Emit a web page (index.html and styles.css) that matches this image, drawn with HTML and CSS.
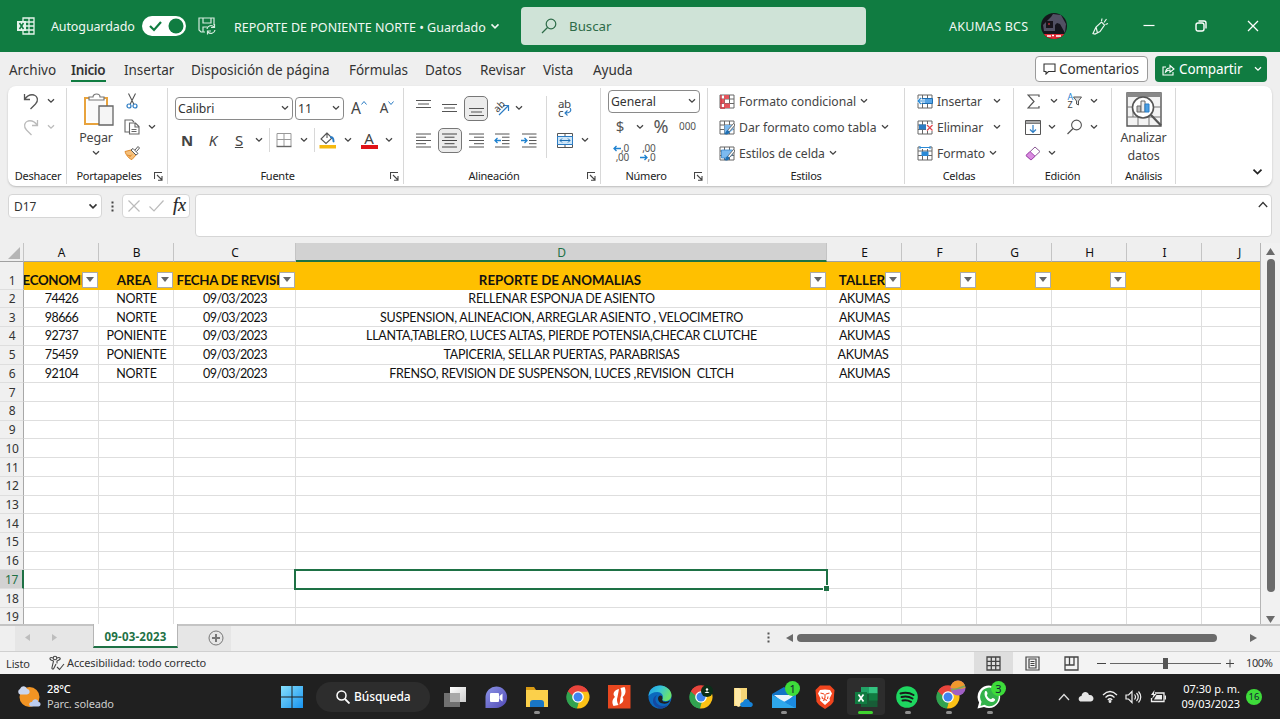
FILE: index.html
```html
<!DOCTYPE html>
<html lang="es">
<head>
<meta charset="utf-8">
<title>REPORTE DE PONIENTE NORTE</title>
<link rel="stylesheet" href="styles.css">
</head>
<body>
<svg class="defs" width="0" height="0">
  <symbol id="chev" viewBox="0 0 8 6"><path d="M1 1.2 4 4.2 7 1.2" fill="none" stroke="currentColor" stroke-width="1.3"/></symbol>
  <symbol id="launch" viewBox="0 0 9 9"><path d="M.5 7V.5H8M3 3l5 5M8 4v4.3H4" fill="none" stroke="#444" stroke-width="1.1"/></symbol>
  <symbol id="grid" viewBox="0 0 16 15"><path d="M1 1h14v13H1zM1 5h14M1 9.500h14M5.500 1v13M10.500 1v13" fill="#fff" stroke="#666" stroke-width="1"/></symbol>
  <symbol id="chrome" viewBox="0 0 24 24"><path d="M12 12 1.900 6.500A11.500 11.500 0 0 1 22.300 7z" fill="#e8453c"/><path d="M12 12 22.300 7A11.500 11.500 0 0 1 11 23.500z" fill="#fbc116"/><path d="M12 12 11 23.500A11.500 11.500 0 0 1 1.900 6.500z" fill="#31a350"/><path d="M12 6.500H22L22.300 7 17 14z" fill="#fbc116"/><path d="M1.900 6.500A11.500 11.500 0 0 1 22 6.500H12L7 11z" fill="#e8453c"/><path d="M1.900 6.500 7 15l6 2-2.500 6.500A11.500 11.500 0 0 1 1.900 6.500z" fill="#31a350"/><circle cx="12" cy="12" r="5.800" fill="#fff"/><circle cx="12" cy="12" r="4.500" fill="#3f83ef"/></symbol>
</svg>

<header class="titlebar">
  <svg class="logo" width="18" height="18" viewBox="0 0 18 18"><path d="M6 1h11v16H6zM6 5h11M6 9h11M6 13h11M12 1v16" fill="none" stroke="#e4f3ea" stroke-width="1.300"/><path d="M0 4h9v10H0z" fill="#e4f3ea"/><path d="m2.500 6 4 6M6.500 6l-4 6" stroke="#107c41" stroke-width="1.500"/></svg>
  <span class="autosave">Autoguardado</span>
  <span class="toggle"><svg width="44" height="20" viewBox="0 0 44 20"><path d="m8 10 4 4 7-8" fill="none" stroke="#107c41" stroke-width="2.200"/><circle cx="34" cy="10" r="7.500" fill="#107c41"/></svg></span>
  <svg class="save" width="18" height="18" viewBox="0 0 18 18" fill="none" stroke="#d5ecdf" stroke-width="1.200"><path d="M16 8V1H1v12l2 2h4M5 1v5h8V1M5 15v-5h4"/><path d="M9 12a4 4 0 0 1 7-2M16.500 7v3.500H13M17 13a4 4 0 0 1-7 2M9.500 17.500V14H13"/></svg>
  <span class="doc">REPORTE DE PONIENTE NORTE • Guardado</span>
  <svg class="docchev" width="10" height="7" viewBox="0 0 8 6"><use href="#chev"/></svg>
  <div class="search"><svg width="16" height="16" viewBox="0 0 16 16" fill="none" stroke="#2d6b48" stroke-width="1.200"><circle cx="10" cy="6" r="4.800"/><path d="M6.500 9.500 1 15"/></svg><span>Buscar</span></div>
  <span class="user">AKUMAS BCS</span>
  <svg class="avatar" width="26" height="26" viewBox="0 0 26 26"><clipPath id="av"><circle cx="13" cy="13" r="13"/></clipPath><g clip-path="url(#av)"><path d="M0 0h26v26H0z" fill="#15151c"/><path d="M2 12 10 4l2-3 8 1 5 9-1 9-5-9-3-1-2 2v6H3z" fill="#515163"/><path d="M5 8h7v7H5z" fill="#18151b"/><path d="M7 10h2v2H7z" fill="#8c2730"/><path d="M0 21h26v5H0z" fill="#de2934"/><path d="M6 23h4M11 22.500h2M15 23h5" stroke="#fff" stroke-width="1.500"/></g></svg>
  <svg class="pen" width="17" height="17" viewBox="0 0 17 17" fill="none" stroke="#eaf5ee" stroke-width="1.200"><path d="M1 15.500 4 9l5.500-5 3 3L8 13.500 3 16zM4 9l1.500 6M9.500 3l.5-2.500M12 4.500 14.500 1M13.500 6.500l2.500-1"/></svg>
  <svg class="win" width="12" height="14" viewBox="0 0 12 14"><path d="M.5 6.500h11" stroke="#fff" stroke-width="1.200"/></svg>
  <svg class="win" width="12" height="14" viewBox="0 0 12 14" fill="none" stroke="#fff" stroke-width="1.400"><rect x="1" y="4" width="8" height="8" rx="2"/><path d="M3.500 2h5.500a2 2 0 0 1 2 2v5.500"/></svg>
  <svg class="win" width="12" height="14" viewBox="0 0 12 14"><path d="m1 2 10 10M11 2 1 12" stroke="#fff" stroke-width="1.300"/></svg>
</header>

<nav class="tabs">
  <span class="t1">Archivo</span><span class="t2">Inicio</span><span class="t3">Insertar</span><span class="t4">Disposición de página</span><span class="t5">Fórmulas</span><span class="t6">Datos</span><span class="t7">Revisar</span><span class="t8">Vista</span><span class="t9">Ayuda</span>
  <div class="comments"><svg width="13" height="12" viewBox="0 0 13 12"><path d="M1 1h11v7.500H5.500L3 11V8.500H1z" fill="none" stroke="#333" stroke-width="1.100"/></svg>Comentarios</div>
  <div class="share"><svg width="13" height="13" viewBox="0 0 13 13" fill="none" stroke="#fff" stroke-width="1.100"><path d="M4 4H1v8h10V9"/><path d="M3.500 9C4 6 6 5 8 5V2.500L12 6 8 9.200V7C6 7 5 7.500 3.500 9z"/></svg><span>Compartir</span><svg class="sc" width="8" height="6"><use href="#chev"/></svg></div>
</nav>

<section class="ribbon">
  <div class="group g-undo">
    <div class="body cells2">
      <svg width="16" height="18" viewBox="0 0 16 18" fill="none" stroke="#555" stroke-width="1.300"><path d="M1.500 2v5.500H7M1.500 7.500C4 4 7 2 11 3c4 1.500 4.500 6 1.500 9L7.500 17"/></svg><svg class="chev" width="8" height="6"><use href="#chev"/></svg>
      <svg width="16" height="18" viewBox="0 0 16 18" fill="none" stroke="#bbb" stroke-width="1.300"><path d="M14.500 2v5.500H9M14.500 7.500C12 4 9 2 5 3 1 4.500.500 9 3.500 12l5 5"/></svg><svg class="chev dim" width="8" height="6"><use href="#chev"/></svg>
    </div>
    <div class="label">Deshacer</div>
  </div>
  <div class="group g-clip">
    <div class="body">
      <div class="big paste">
        <svg width="32" height="34" viewBox="0 0 32 34"><path d="M2 5h22v26H2z" fill="#fff" stroke="#e8a33d" stroke-width="2"/><path d="M4.500 7.500h17v21h-17z" fill="#fafafa"/><path d="M6 7V4h4c0-4 7-4 7 0h4v3z" fill="#fff" stroke="#777" stroke-width="1.200"/><path d="M16 13h14v19H16z" fill="#f5f5f5" stroke="#666" stroke-width="1.300"/></svg>
        <span>Pegar</span><svg class="chev" width="8" height="6"><use href="#chev"/></svg>
      </div>
      <div class="cells2">
        <svg width="12" height="16" viewBox="0 0 12 16" fill="none"><path d="m2.500.500 5.500 11M9.500.500 4 11.500" stroke="#555" stroke-width="1.100"/><circle cx="3" cy="13" r="2" stroke="#2b7cc4" stroke-width="1.200"/><circle cx="9" cy="13" r="2" stroke="#2b7cc4" stroke-width="1.200"/></svg><i></i>
        <svg width="16" height="16" viewBox="0 0 16 16" fill="#fff" stroke="#666" stroke-width="1.100"><path d="M5 13H1V1h7l2 2"/><path d="M5.500 4h6l3.500 3.500V15H5.500zM11 4v4h4M7.500 10.500h5M7.500 12.500h5"/></svg><svg class="chev" width="8" height="6"><use href="#chev"/></svg>
        <svg width="16" height="14" viewBox="0 0 16 14"><path d="M1 5.500 7 4l5 5-4 4.500C5 13 2 9 1 5.500z" fill="#f5c07c" stroke="#e08b2c"/><path d="m3 9 4 1M5 11.500l3-3" stroke="#e08b2c"/><path d="m7 4 2-1.500 5 5L12 9zM11 4l3-3.500 1.500 1.500L12.500 5.500" fill="#fff" stroke="#555"/></svg><i></i>
      </div>
    </div>
    <div class="label">Portapapeles</div><svg class="launch" width="9" height="9"><use href="#launch"/></svg>
  </div>
  <div class="group g-font">
    <div class="body col">
      <div class="row r-font1"><div class="select"><span>Calibri</span><svg class="chev" width="8" height="6"><use href="#chev"/></svg></div><div class="select"><span>11</span><svg class="chev" width="8" height="6"><use href="#chev"/></svg></div><div class="grow-a">A<svg width="6" height="4" viewBox="0 0 6 4"><path d="m.5 3.500 2.500-3 2.500 3" fill="none" stroke="#2b7cc4"/></svg></div><div class="grow-a small">A<svg width="6" height="4" viewBox="0 0 6 4"><path d="m.5.500 2.500 3 2.500-3" fill="none" stroke="#2b7cc4"/></svg></div></div>
      <div class="row r-font2"><b class="fmt">N</b><i class="fmt">K</i><u class="fmt">S</u><svg class="chev" width="8" height="6"><use href="#chev"/></svg><em class="vs"></em>
        <svg width="16" height="16" viewBox="0 0 16 16" fill="none" stroke="#666"><path d="M1 1.500h14M1 1.500V14M15 1.500V14M8 1.500V14M1 7.500h14" stroke="#999"/><path d="M.5 14.500h15" stroke-width="1.400"/></svg><svg class="chev" width="8" height="6"><use href="#chev"/></svg><em class="vs"></em>
        <svg width="18" height="18" viewBox="0 0 18 18"><path d="m8 2-6 6 5 4.500 6-5.500zM8 2v5" fill="#fff" stroke="#555" stroke-width="1.100"/><path d="M11 5c4 0 4.500 3 4.500 6-1 1-2 0-2-1 0-2-.5-3-2.500-3z" fill="#2b7cc4"/><path d="M.5 14h16.500v3.500H.5z" fill="#f5b90f"/></svg><svg class="chev" width="8" height="6"><use href="#chev"/></svg>
        <div class="font-a">A</div><svg class="chev" width="8" height="6"><use href="#chev"/></svg></div>
    </div>
    <div class="label">Fuente</div><svg class="launch" width="9" height="9"><use href="#launch"/></svg>
  </div>
  <div class="group g-align">
    <div class="body">
      <div class="col">
        <div class="row r-al1">
          <svg class="up" width="15" height="10" viewBox="0 0 15 10"><path d="M0 1.500h15M2 5h11M0 8.500h15" stroke="#555"/></svg>
          <svg width="15" height="10" viewBox="0 0 15 10"><path d="M0 1.500h15M2 5h11M0 8.500h15" stroke="#555"/></svg>
          <span class="on"><svg class="down" width="15" height="10" viewBox="0 0 15 10"><path d="M0 1.500h15M2 5h11M0 8.500h15" stroke="#555"/></svg></span>
          <div class="orient"><span>ab</span><svg width="12" height="12" viewBox="0 0 12 12"><path d="m1 11 9-9M5 1.500h5.500V7" fill="none" stroke="#2b7cc4" stroke-width="1.200"/></svg></div>
          <svg class="chev" width="8" height="6"><use href="#chev"/></svg>
        </div>
        <div class="row r-al2">
          <svg width="15" height="15" viewBox="0 0 15 15"><path d="M0 1h15M0 4.200h10M0 7.500h15M0 10.700h10M0 14h15" stroke="#555"/></svg>
          <span class="on"><svg width="15" height="15" viewBox="0 0 15 15"><path d="M0 1h15M2.500 4.200h10M0 7.500h15M2.500 10.700h10M0 14h15" stroke="#444"/></svg></span>
          <svg width="15" height="15" viewBox="0 0 15 15"><path d="M0 1h15M5 4.200h10M0 7.500h15M5 10.700h10M0 14h15" stroke="#555"/></svg>
          <svg width="16" height="15" viewBox="0 0 16 15"><path d="M1 1h14.500M8 4.200h7.500M8 7.500h7.500M8 10.700h7.500M1 14h14.500" stroke="#555"/><path d="M7 7.500H1M3.500 5 1 7.500 3.500 10" fill="none" stroke="#1f82d0" stroke-width="1.300"/></svg>
          <svg width="16" height="15" viewBox="0 0 16 15"><path d="M1 1h14.500M8 4.200h7.500M8 7.500h7.500M8 10.700h7.500M1 14h14.500" stroke="#555"/><path d="M0 7.500h6M3.500 5 6 7.500 3.500 10" fill="none" stroke="#1f82d0" stroke-width="1.300"/></svg>
        </div>
      </div>
      <em class="vs tall"></em>
      <div class="col">
        <div class="row r-wrap"><div class="wrap-icon"><span>ab</span><span>c<svg width="9" height="8" viewBox="0 0 9 8"><path d="M7 0c2 3 0 5-5 5M4.500 2.500 2 5l2.500 2.500" fill="none" stroke="#2b7cc4" stroke-width="1.100"/></svg></span></div></div>
        <div class="row r-wrap"><svg width="16" height="15" viewBox="0 0 16 15"><path d="M.5.500h15v14H.5z" fill="#fff" stroke="#555"/><path d="M8 0v3M8 12v3" stroke="#555"/><path d="M.5 3.500h15v8H.5z" fill="#cfe6f8" stroke="#2b7cc4"/><path d="M3 7.500h10M5 5.500l-2 2 2 2M11 5.500l2 2-2 2" fill="none" stroke="#1f6fb2"/></svg><svg class="chev" width="8" height="6"><use href="#chev"/></svg></div>
      </div>
    </div>
    <div class="label">Alineación</div><svg class="launch" width="9" height="9"><use href="#launch"/></svg>
  </div>
  <div class="group g-num">
    <div class="body col3">
      <div class="row"><div class="select"><span>General</span><svg class="chev" width="8" height="6"><use href="#chev"/></svg></div></div>
      <div class="row r-num2"><span class="sym">$</span><svg class="chev" width="8" height="6"><use href="#chev"/></svg><span class="sym pct">%</span><span class="zeros">000</span></div>
      <div class="row r-num3"><div class="dec"><span><svg width="8" height="7" viewBox="0 0 8 7"><path d="M8 3.500H1M3.500 1 1 3.500 3.500 6" fill="none" stroke="#1f82d0" stroke-width="1.300"/></svg>,0</span><span>,00</span></div><div class="dec"><span>,00</span><span><svg width="8" height="7" viewBox="0 0 8 7"><path d="M0 3.500h7M4.500 1 7 3.500 4.500 6" fill="none" stroke="#1f82d0" stroke-width="1.300"/></svg>,0</span></div></div>
    </div>
    <div class="label">Número</div><svg class="launch" width="9" height="9"><use href="#launch"/></svg>
  </div>
  <div class="group g-style">
    <div class="body col3">
      <div class="row cmd"><svg width="16" height="15"><use href="#grid"/><path d="M5 1h5v4H5zM1.500 5h4v4.500h-4zM5 9.500h6V14H5z" fill="#e4545c"/><path d="M2 1v13h4" fill="none" stroke="#d13a44" stroke-width="1.500"/></svg><span>Formato condicional</span><svg class="chev" width="8" height="6"><use href="#chev"/></svg></div>
      <div class="row cmd"><svg width="16" height="15"><use href="#grid"/><path d="M5.500 5h9v4.500l-5 4h-4z" fill="#7cbaf0"/><path d="m14.500 3.500-6 7 1.500 1.500 6-7z" fill="#fff" stroke="#555" stroke-width=".8"/><path d="M9 10c-2 0-2 3-4 4 3 1 5.500 0 5.500-2z" fill="#1f6fb2"/></svg><span>Dar formato como tabla</span><svg class="chev" width="8" height="6"><use href="#chev"/></svg></div>
      <div class="row cmd"><svg width="16" height="15"><use href="#grid"/><path d="M2.500 4h11v5l-4 3h-7z" fill="#7cbaf0" stroke="#3a86c8" stroke-width=".8"/><path d="m14.500 3.500-6 7 1.500 1.500 6-7z" fill="#fff" stroke="#555" stroke-width=".8"/><path d="M9 10c-2 0-2 3-4 4 3 1 5.500 0 5.500-2z" fill="#1f6fb2"/></svg><span class="w3">Estilos de celda</span><svg class="chev" width="8" height="6"><use href="#chev"/></svg></div>
    </div>
    <div class="label">Estilos</div>
  </div>
  <div class="group g-cells">
    <div class="body col3">
      <div class="row cmd"><svg width="16" height="15"><use href="#grid"/><path d="M5 4.500h10.500v5H5z" fill="#59a5e6" stroke="#1f6fb2"/><path d="M8 7H1M4 4 1 7l3 3" fill="none" stroke="#fff" stroke-width="3"/><path d="M8 7H1M4 4 1 7l3 3" fill="none" stroke="#2b8ad6" stroke-width="1.200"/></svg><span>Insertar</span><svg class="chev" width="8" height="6"><use href="#chev"/></svg></div>
      <div class="row cmd"><svg width="16" height="15"><use href="#grid"/><path d="M2 4.500h8v5H2z" fill="#2b7cc4"/><path d="M9 4h7v7H9z" fill="#fff"/><path d="m10 5 5.500 5.500M15.500 5 10 10.500" stroke="#e0454d" stroke-width="1.200"/></svg><span>Eliminar</span><svg class="chev" width="8" height="6"><use href="#chev"/></svg></div>
      <div class="row cmd"><svg width="16" height="15"><use href="#grid"/><path d="M3 0h10v3H3z" fill="#fff"/><path d="M3 1.500h10M3 0v3M13 0v3" stroke="#2b8ad6"/><path d="M4.500 5.500h7v4.500h-7z" fill="#2b8ad6"/></svg><span class="w3">Formato</span><svg class="chev" width="8" height="6"><use href="#chev"/></svg></div>
    </div>
    <div class="label">Celdas</div>
  </div>
  <div class="group g-edit">
    <div class="body">
      <div class="cells4">
        <svg width="13" height="15" viewBox="0 0 13 15"><path d="M12 3V1H1l6 6.500L1 14h11v-2" fill="none" stroke="#555" stroke-width="1.200"/></svg><svg class="chev e1" width="8" height="6"><use href="#chev"/></svg><div class="az"><span><b>A</b><b>Z</b></span><svg width="9" height="10" viewBox="0 0 9 10"><path d="M.5 1h8L5.500 5v4L3.500 8V5z" fill="#ddd" stroke="#555"/></svg></div><svg class="chev" width="8" height="6"><use href="#chev"/></svg>
        <svg width="16" height="15" viewBox="0 0 16 15"><path d="M.5.500h15v14H.5zM.5 3.500h15" fill="#fff" stroke="#555"/><path d="M1 1h14v2.500H1z" fill="#aaa"/><path d="M8 5v7.500M5 9.500l3 3 3-3" fill="none" stroke="#2b7cc4" stroke-width="1.200"/></svg><svg class="chev" width="8" height="6"><use href="#chev"/></svg><svg width="16" height="16" viewBox="0 0 16 16"><circle cx="9.500" cy="6" r="4.900" fill="none" stroke="#555" stroke-width="1.100"/><path d="M6 9.500.5 15" stroke="#555" stroke-width="1.200"/></svg><svg class="chev" width="8" height="6"><use href="#chev"/></svg>
        <svg width="16" height="15" viewBox="0 0 16 15"><path d="M1 9.500 10 1l5 4.500-9 8.500z" fill="#fff" stroke="#8a5a94"/><path d="m1 9.500 4-4 5 4.700-4 3.800z" fill="#d98be0" stroke="#a548b0"/></svg><svg class="chev" width="8" height="6"><use href="#chev"/></svg>
      </div>
    </div>
    <div class="label">Edición</div>
  </div>
  <div class="group g-an">
    <div class="body">
      <div class="big"><svg width="36" height="35" viewBox="0 0 36 35"><path d="M1 1h34v33H1z" fill="#f3f3f3" stroke="#555" stroke-width="1.400"/><path d="M1 1h34v4H1z" fill="#888"/><path d="M1 15h34M1 25h34M12 25v9M23 25v9M7 15v10" stroke="#777"/><circle cx="17" cy="15.500" r="10.500" fill="#fff" stroke="#555" stroke-width="1.600"/><path d="M11 14h4v6h-4z" fill="#bbb" stroke="#666"/><path d="M15 9h4v11h-4z" fill="#eee" stroke="#666"/><path d="M19 12h4v8h-4z" fill="#4ba0e4" stroke="#2b7cc4"/><path d="m25 23 10 10.500" stroke="#555" stroke-width="2.200"/></svg><span>Analizar</span><span>datos</span></div>
    </div>
    <div class="label">Análisis</div>
  </div>
  <svg class="collapse" width="11" height="8" viewBox="0 0 8 6"><use href="#chev"/></svg>
</section>

<section class="formula">
  <div class="namebox"><span>D17</span><svg width="10" height="7" viewBox="0 0 8 6"><use href="#chev"/></svg></div>
  <svg class="dots" width="3" height="11" viewBox="0 0 3 11" fill="#444"><path d="M.5.500h2v2h-2zM.5 4.500h2v2h-2zM.5 8.500h2v2h-2z"/></svg>
  <div class="fxbox"><svg width="12" height="12" viewBox="0 0 12 12"><path d="m.5.500 11 11M11.500.500l-11 11" stroke="#bbb" stroke-width="1.200"/></svg><svg width="15" height="12" viewBox="0 0 15 12"><path d="M.5 6.500 5 11 14.500.500" fill="none" stroke="#bbb" stroke-width="1.200"/></svg><span>fx</span></div>
  <div class="input"><svg width="10" height="7" viewBox="0 0 10 7"><path d="m.8 6 4.200-4.500L9.200 6" fill="none" stroke="#333" stroke-width="1.200"/></svg></div>
</section>

<main class="work">
  <div class="sheet" id="sheet"></div>
  <div class="vscroll"><svg width="9" height="7" viewBox="0 0 9 7"><path d="M4.500 0 9 7H0z" fill="#6b6b6b"/></svg><div class="vthumb"></div><svg width="9" height="7" viewBox="0 0 9 7"><path d="M0 0h9L4.500 7z" fill="#6b6b6b"/></svg></div>
</main>

<section class="sheetbar">
  <div class="sheettabs">
    <svg class="nav1" width="5" height="7" viewBox="0 0 5 7"><path d="M5 0v7L0 3.500z" fill="#bdbdbd"/></svg><svg class="nav2" width="5" height="7" viewBox="0 0 5 7"><path d="M0 0v7l5-3.500z" fill="#bdbdbd"/></svg>
    <div class="tab">09-03-2023</div>
    <svg class="plus" width="16" height="16" viewBox="0 0 16 16"><circle cx="8" cy="8" r="7" fill="none" stroke="#777"/><path d="M4 8h8M8 4v8" stroke="#777" stroke-width="2"/></svg>
  </div>
  <svg class="hdots" width="3" height="11" viewBox="0 0 3 11" fill="#555"><path d="M.5.500h2v2h-2zM.5 4.500h2v2h-2zM.5 8.500h2v2h-2z"/></svg>
  <svg class="ha" width="7" height="8" viewBox="0 0 7 8"><path d="M7 0v8L0 4z" fill="#6b6b6b"/></svg><div class="hthumb"></div><svg class="hb" width="7" height="8" viewBox="0 0 7 8"><path d="M0 0v8l7-4z" fill="#6b6b6b"/></svg>
</section>

<section class="status">
  <span class="ready">Listo</span>
  <svg class="acc" width="16" height="16" viewBox="0 0 16 16" fill="none" stroke="#444" stroke-width="1.100"><circle cx="6" cy="3" r="1.800"/><path d="M4 3C1 1.500 0 4 2 5l2.500 1L3 12.500c-.5 2 1.500 2 2 .5L7 9M8 3c3-1.500 4.500 1 2 2L8 6v2.500M8 12l2.500 2.500L15 9"/></svg>
  <span class="acctext">Accesibilidad: todo correcto</span>
  <div class="view sel"><svg width="15" height="15" viewBox="0 0 15 15"><path d="M1 1h13v13H1zM1 5.300h13M1 9.700h13M5.300 1v13M9.700 1v13" fill="none" stroke="#444" stroke-width="1.300"/></svg></div>
  <div class="view"><svg width="15" height="15" viewBox="0 0 15 15"><path d="M1 1h13v13H1zM4 3h7v9H4zM5.500 5.500h4M5.500 7.500h4M5.500 9.500h4" fill="none" stroke="#444" stroke-width="1.200"/></svg></div>
  <div class="view"><svg width="15" height="15" viewBox="0 0 15 15"><path d="M1 1h13v13H1zM1 9h9V1M5.500 1v8" fill="none" stroke="#444" stroke-width="1.300"/></svg></div>
  <svg class="zoom" width="138" height="13" viewBox="0 0 138 13"><path d="M0 6.500h9M129 6.500h8M133 2.500v8" stroke="#444"/><path d="M13 6.500h111" stroke="#666"/><path d="M66 1h5v11h-5z" fill="#555"/></svg>
  <span class="pc">100%</span>
</section>

<footer class="taskbar">
  <svg class="weather" width="24" height="24" viewBox="0 0 24 24"><circle cx="12.500" cy="12" r="10" fill="#f29423"/><path d="M3 9.500a3 3 0 0 1 0-5.500c2-4 6-3 7 0 3 0 4 5 0 5.500z" fill="#cbd6ee"/><path d="M14 21.500c-3-1-2-5 1-4.500 1-4 6-3.500 6.500 0 3 .5 2.500 4.500 0 4.500z" fill="#bccdf0"/></svg>
  <div class="wtext"><b>28°C</b><span>Parc. soleado</span></div>
  <svg class="start" width="22" height="22" viewBox="0 0 22 22"><defs><linearGradient id="w" x1="0" y1="0" x2="1" y2="1"><stop offset="0" stop-color="#86e0fd"/><stop offset="1" stop-color="#1793f0"/></linearGradient></defs><path d="M0 0h10.500v10.500H0zM11.500 0H22v10.500H11.500zM0 11.500h10.500V22H0zM11.500 11.500H22V22H11.500z" fill="url(#w)"/></svg>
  <div class="pill"><svg width="14" height="14" viewBox="0 0 14 14"><circle cx="5.500" cy="5.500" r="4.500" fill="none" stroke="#fff" stroke-width="1.500"/><path d="m9 9 4.500 4.500" stroke="#fff" stroke-width="1.800"/></svg><span>Búsqueda</span></div>
  <div class="apps">
    <div><svg width="24" height="24" viewBox="0 0 24 24"><defs><linearGradient id="tv" x1="0" y1="0" x2="1" y2="1"><stop offset="0" stop-color="#fff"/><stop offset="1" stop-color="#ccc"/></linearGradient></defs><path d="M7 2h16v15H7z" fill="url(#tv)"/><path d="M1 8h16v14H1z" fill="#707070"/><path d="M7 8h10v9H7z" fill="#a9a9a9"/></svg></div>
    <div><svg width="24" height="24" viewBox="0 0 24 24"><defs><linearGradient id="ch" x1="0" y1="0" x2="1" y2="1"><stop offset="0" stop-color="#8d95e8"/><stop offset="1" stop-color="#5149b5"/></linearGradient></defs><path d="M1.500 23V12A10.800 10.800 0 1 1 12.300 23z" fill="url(#ch)"/><rect x="6" y="8" width="9" height="9" rx="1" fill="#fff"/><path d="m15.500 11 3-2.500v8l-3-2.500z" fill="#fff"/></svg></div>
    <div><svg width="24" height="24" viewBox="0 0 24 24"><path d="M1 2h8l2 3H1z" fill="#d99b14"/><path d="M1 5h22v17H1z" fill="#fbd04b"/><path d="M5 22v-4q0-3 3-3h8q3 0 3 3v4z" fill="#1976c5"/></svg><em></em></div>
    <div><svg width="24" height="24"><use href="#chrome"/></svg></div>
    <div><svg width="24" height="24" viewBox="0 0 24 24"><path d="M1 0h22.500v23.500H1z" fill="#e8471f"/><path d="m13.500 3 4-1c2 4 1 8-2 10 2 3 .5 6-3 7.500l1-7c1.500-3 1-6 0-9.500zM12 4l-1.500 8c-1 3-.5 5 1 8l-5 1c-2-4-1-7 1.500-9C5 9 7 5 12 4z" fill="#fff"/></svg></div>
    <div><svg width="24" height="24" viewBox="0 0 24 24"><defs><linearGradient id="e1" x1="0" y1="0" x2="1" y2=".4"><stop offset="0" stop-color="#229ee8"/><stop offset=".5" stop-color="#35c3d8"/><stop offset="1" stop-color="#6be36d"/></linearGradient></defs><circle cx="12" cy="12" r="11.500" fill="#0b69bd"/><path d="M.5 11C1 4 6 .5 12 .5S23.500 5 23.500 10c0 4-3 6-6 6s-4-1-3-2.500C16 10 13 7 9.500 7 5 7 2 9 .5 11z" fill="url(#e1)"/><path d="M9 10c-4 5 0 11 6 11 3 0 5-1 7-3-3 4-7 5.500-10 5.500C7 22 5 19 5 16s1.500-5 4-6z" fill="#1548a0"/><path d="M14.500 13.500C13 17 18 18 22 15.500c-2 5-12 4-12-2 0-2 2-4 4-2.500z" fill="#202020"/></svg></div>
    <div><svg width="24" height="24"><use href="#chrome"/><circle cx="18" cy="6" r="6" fill="#0b2e19"/><circle cx="18" cy="4.500" r="1.200" fill="#fff"/><path d="M15.500 8q2.500-3 5 0z" fill="#fff"/></svg></div>
    <div><svg width="24" height="24" viewBox="0 0 24 24"><path d="M3 3h13v18H3z" fill="#f7d677"/><path d="M4 3h4l2 2v16l-3 1-3-3z" fill="#ffe9a6"/><path d="M11 22c-3-1-2-5 1-5 1-4 6-4 7 0 3 0 4 4 1 5z" fill="#1683d9"/></svg></div>
    <div><svg width="24" height="24" viewBox="0 0 24 24"><path d="M0 9 12 2l12 7v14H0z" fill="#1273c6"/><path d="M2 10h20l-9 9z" fill="#eaf3fb"/><path d="m0 10 24 13H0z" fill="#2ea8ec"/><path d="M24 10 12 17l12 6z" fill="#1b8ae0"/></svg><em></em><strong>1</strong></div>
    <div><svg width="24" height="24" viewBox="0 0 24 24"><path d="M7 .5h10l4.500 4.500-1 11.500q-1 3-8.500 7.500-7.500-4.500-8.500-7.500L2.500 5z" fill="#f1451e"/><path d="m7 5 5-.5 5 .5 2 3.500-2.500 5 .5 2-5 4.500-5-4.500.5-2L5 8.500z" fill="#fff"/><path d="m7.500 8 3.500 1M16.500 8 13 9M12 9v4l-1.500 1M10 15.500l2-1 2 1M9 11.500l.5 2.500M15 11.500l-.5 2.500" stroke="#f1451e" fill="none" stroke-width="1.100"/></svg></div>
    <div class="active"><svg width="24" height="24" viewBox="0 0 24 24"><path d="M7 2h16.500v20H7z" fill="#185c37"/><path d="M15 2h8.500v6.500H15z" fill="#33c481"/><path d="M7 2h8v6.500H7z" fill="#21a366"/><path d="M15 8.500h8.500v7H15z" fill="#107c41"/><path d="M1 7h12v12H1z" fill="#107c41"/><path d="m4.500 9.500 5 7M9.500 9.500l-5 7" stroke="#fff" stroke-width="1.700"/></svg><em></em></div>
    <div><svg width="24" height="24" viewBox="0 0 24 24"><circle cx="12" cy="12" r="10.800" fill="#1ed760"/><path d="M5.500 8.500q7-2 13 1.500M6.500 12q6-1.500 11 1.500M7.500 15.500q4.500-1 8.500 1.300" fill="none" stroke="#191919" stroke-width="2" stroke-linecap="round"/></svg><em></em></div>
    <div><svg width="24" height="24"><use href="#chrome"/></svg><em></em><svg class="tiny" width="16" height="16" viewBox="0 0 16 16"><circle cx="8" cy="8" r="7.500" fill="#a05fc5"/><path d="M.5 8a7.500 7.500 0 0 1 15 0Q8 10 .5 8z" fill="#f0982e"/><path d="M1 10q7-1 14-4" stroke="#7fa85a" stroke-width="1.500" fill="none"/></svg></div>
    <div><svg width="24" height="24" viewBox="0 0 24 24"><path d="m.5 23.500 1.600-6A11.300 11.300 0 1 1 7 22z" fill="#fff"/><path d="m3.500 21 1-4.200A9.300 9.300 0 1 1 7.500 19.800z" fill="#33b34a"/><path d="M8 6.500c1-1 2-.5 2.500 2 0 1-1 1.500-.5 2.200 1 1.800 2 2.800 4 3.500.8 0 1-1.500 2-1.200 2.500 1 2.500 1.500 1.500 3-4 4-12-4-9.500-9.500z" fill="#fff"/></svg><em></em><strong>3</strong></div>
  </div>
  <div class="tray">
    <svg width="12" height="8" viewBox="0 0 12 8"><path d="m1 7 5-5.500L11 7" fill="none" stroke="#ddd" stroke-width="1.300"/></svg>
    <svg width="16" height="11" viewBox="0 0 16 11"><path d="M3.500 10.500C-.5 10.500 0 5 3.500 5 4 0 10 0 11 4c5-1 6 6 2 6.500z" fill="#e6e6e6"/></svg>
    <svg width="16" height="13" viewBox="0 0 16 13" fill="none" stroke="#eee" stroke-width="1.300"><path d="M1 5Q8-2 15 5M3.500 7.500q4.500-4.500 9 0M5.800 10q2.200-2.500 4.400 0"/><circle cx="8" cy="11.500" r=".8"/></svg>
    <svg width="17" height="14" viewBox="0 0 17 14" fill="none" stroke="#eee" stroke-width="1.200"><path d="M1 5h2.500L7 1.500v11L3.500 9H1zM9.500 4.500q2 2.500 0 5M11.500 3q3.500 4 0 8M13.500 1.500q4.500 5.500 0 11"/></svg>
    <svg width="16" height="13" viewBox="0 0 16 13"><path d="M5 3h9v8.500H1.500V8M15.500 5.500v4" fill="none" stroke="#eee" stroke-width="1.300"/><path d="M6.500 5H12v4.500H4z" fill="#eee"/><path d="M4.500 0 1 5h2.500L2 9l4.500-5H4z" fill="#eee"/></svg>
  </div>
  <div class="clock"><span>07:30 p. m.</span><span>09/03/2023</span></div>
  <span class="badge">16</span>
</footer>
<script src="sheet.js"></script>
</body>
</html>
```

FILE: styles.css
```css
* { box-sizing: border-box; }
body { margin: 0; width: 1280px; height: 719px; overflow: hidden; display: flex; flex-direction: column; background: #efefef; font-family: "Noto Sans", "Open Sans", sans-serif; font-size: 12px; color: #333; white-space: nowrap; }
svg { display: block; flex: none; }
.defs { position: absolute; }

/* Title bar */
.titlebar { height: 52px; flex: none; background: #107c41; color: #f0f8f3; display: flex; align-items: center; font-size: 12.5px; }
.logo { margin-left: 17px; }
.autosave { margin-left: 16px; width: 86px; letter-spacing: -.12px; }
.toggle { margin-left: 5px; width: 44px; height: 20px; border-radius: 10px; background: #fff; }
.save { margin-left: 12px; }
.doc { margin-left: 18px; width: 252px; padding-top: 2px; }
.docchev { margin-left: 4px; }
.search { margin-left: 21px; width: 345px; height: 38px; border-radius: 4px; background: #cfe3d7; color: #2d6b48; display: flex; align-items: center; gap: 12px; padding-left: 20px; font-size: 13.300px; }
.user { margin-left: 83px; width: 80px; letter-spacing: .2px; }
.avatar { margin-left: 12px; }
.pen { margin-left: 25px; }
.win { margin-left: 40px; }
.pen + .win { margin-left: 34px; }

/* Ribbon tabs */
.tabs { height: 34px; flex: none; display: flex; align-items: center; font-size: 13.500px; letter-spacing: -.03px; color: #333; padding-left: 9px; }
.tabs > span { flex: none; height: 100%; padding-top: 9px; line-height: 19px; }
.t1 { width: 62px; }
.t2 { width: 35px; margin-right: 18px; font-weight: 600; letter-spacing: -.35px; box-shadow: inset 0 -4px #efefef, inset 0 -6px #107c41; }
.t3 { width: 67px; }
.t4 { width: 158px; }
.t5 { width: 76px; }
.t6 { width: 55px; }
.t7 { width: 63px; }
.t8 { width: 50px; }
.t9 { width: 45px; }
.comments, .share { height: 26px; border-radius: 4px; display: flex; align-items: center; letter-spacing: -.15px; }
.comments { margin-left: 397px; width: 113px; border: 1px solid #9b9b9b; background: #fff; padding-left: 7px; gap: 3px; }
.share { margin-left: 7px; width: 112px; background: #107c41; color: #fff; padding-left: 7px; gap: 4px; }
.share span { width: 67px; }
.share .sc { margin-left: 4px; }

/* Ribbon */
.ribbon { height: 100px; flex: none; margin: 0 8px; background: #fff; border-radius: 8px; box-shadow: 0 1px 2px #bbb; display: flex; color: #444; }
.group { position: relative; height: 96px; margin-top: 2px; border-right: 1px solid #d8d8d8; background-clip: padding-box; display: flex; flex-direction: column; }
.body { height: 79px; display: flex; }
.label { height: 18px; line-height: 20px; text-align: center; color: #222; font-size: 11px; letter-spacing: -.25px; }
.launch { position: absolute; right: 4px; bottom: 3px; }
.chev { color: #444; }
.chev.dim { color: #bbb; }
.col { display: flex; flex-direction: column; padding-top: 4px; }
.col3 { display: flex; flex-direction: column; }
.row { display: grid; height: 26px; align-items: center; justify-items: center; }
.body.col .row, .col .row { height: 32px; }
.cells2 { display: grid; grid-template: repeat(3, 26px) / 22px 18px; place-items: center; align-content: start; }
.big { display: flex; flex-direction: column; align-items: center; font-size: 12.500px; line-height: 18px; padding-top: 4px; letter-spacing: -.15px; }
.vs { width: 1px; height: 24px; background: #d8d8d8; }
.vs.tall { height: 62px; margin: 8px 14px 0 4px; }
.select { border: 1px solid #8a8a8a; border-radius: 4px; background: #fff; display: flex; align-items: center; justify-content: space-between; height: 23px; padding: 0 3px 0 2px; font-size: 12.200px; color: #333; }

.g-undo { width: 59px; }
.g-undo .cells2 { padding-left: 12px; }
.g-undo .label { padding-left: 2px; }
.g-clip { width: 101px; }
.paste { width: 58px; padding-top: 5px; }
.paste svg:first-child { margin-left: 5px; }
.paste > span { margin-top: 2px; height: 21px; }
.g-clip .cells2 { margin-left: -4px; }
.g-clip .label { padding-right: 16px; }
.g-font { width: 236px; }
.r-font1 { grid-template-columns: 118px 49px 26px 26px; column-gap: 2px; margin-left: 7px; justify-content: start; }
.r-font1 .select { width: 100%; }
.r-font2 { grid-template-columns: 26px 26px 26px 14px 6px 24px 15px 6px 22px 17px 26px 14px; margin-left: 6px; justify-content: start; }
.g-font .label { padding-right: 16px; }
.fmt { font-size: 15px; line-height: 18px; }
.grow-a { display: flex; font-size: 15.500px; line-height: 20px; }
.grow-a svg { margin-top: 3px; }
.grow-a.small { font-size: 13.500px; }
.font-a { font-size: 15px; line-height: 14px; width: 17px; text-align: center; border-bottom: 4px solid #e01217; }
.g-align { width: 197px; }
.g-align .body { padding-left: 6px; }
.r-al1, .r-al2 { grid-template-columns: 26px 27px 26px 26px 27px; }
.r-al1 .chev { justify-self: start; }
.up { margin-bottom: 8px; }
.down { margin-top: 8px; }
.on { width: 24px; height: 25px; border: 1px solid #777; border-radius: 5px; background: #ececec; display: grid; place-items: center; }
.orient { display: flex; align-items: center; width: 18px; }
.orient span { font-size: 10px; transform: rotate(-45deg); margin: -4px -7px 0 0; }
.orient svg { margin-top: 4px; }
.r-wrap { grid-template-columns: 28px 12px; margin-left: -10px; }
.wrap-icon { font-size: 11.500px; line-height: 9px; display: flex; flex-direction: column; letter-spacing: -.4px; }
.wrap-icon span { display: flex; height: 9px; }
.g-align .label { padding-right: 16px; }
.g-num { width: 107px; }
.g-num .select { width: 92px; }
.r-num2 { grid-template-columns: 24px 16px 26px 27px; margin-left: 7px; justify-content: start; }
.r-num3 { grid-template-columns: 26px 27px; margin-left: 7px; justify-content: start; }
.sym { font-size: 15px; color: #555; margin-top: -2px; }
.pct { font-size: 18px; }
.zeros { font-size: 10px; margin-top: -2px; color: #555; }
.dec { display: flex; flex-direction: column; font-size: 10px; line-height: 9px; letter-spacing: -.3px; align-items: flex-end; color: #555; }
.dec span { display: flex; align-items: center; }
.g-num .label { padding-right: 16px; }
.g-style { width: 197px; }
.cmd { display: flex; gap: 4px; padding-left: 11px; font-size: 12.200px; }
.g-style .w3 { letter-spacing: -.1px; }
.g-cells { width: 109px; }
.g-cells .cmd { padding-left: 12px; }
.g-cells .cmd > span { width: 52px; letter-spacing: -.1px; }
.g-cells .cmd > .w3 { width: 48px; }
.g-edit { width: 98px; }
.cells4 { display: grid; grid-template: repeat(3, 26px) / 22px 16px 30px 8px; place-items: center; padding-left: 8px; }
.e1 { margin-left: 3px; }
.az { display: flex; align-items: center; }
.az span { display: flex; flex-direction: column; font-size: 9px; line-height: 8px; }
.az b { font-weight: 400; }
.az b:first-child { color: #1f82d0; }
.g-an { width: 64px; }
.g-an .big { width: 100%; }
.g-an .big span:nth-child(2) { margin-top: 2px; }
.collapse { margin: 82px 0 0 76px; color: #222; }

/* Formula bar */
.formula { height: 57px; flex: none; padding: 8px 8px 0; display: flex; align-items: flex-start; }
.namebox { width: 94px; height: 24px; background: #fff; border: 1px solid #d6d6d6; border-radius: 4px; display: flex; align-items: center; justify-content: space-between; padding: 0 3px 0 5px; }
.dots { margin: 7px 8px 0 9px; }
.fxbox { width: 68px; height: 24px; background: #fff; border: 1px solid #d6d6d6; border-radius: 4px; display: flex; align-items: center; padding-left: 5px; gap: 9px; }
.fxbox span { font: italic 18px/20px "Liberation Serif", serif; color: #222; margin-top: -3px; -webkit-text-stroke: .2px #222; }
.input { margin-left: 5px; flex: 1; height: 43px; background: #fff; border: 1px solid #d6d6d6; border-radius: 4px; display: flex; justify-content: flex-end; padding: 6px 3px 0; }

/* Sheet */
.work { height: 383px; flex: none; display: flex; overflow: hidden; border-bottom: 2px solid #c4c4c4; }
.sheet { position: relative; width: 1261px; height: 381px; overflow: hidden; border-right: 1px solid #b5b5b5; background: #fff; font-family: Lato, sans-serif; color: #111; }
.line { display: grid; grid-template-columns: 24px 75px 75px 122px 531px 75px 75px 75px 75px 75px 75px; height: 18.720px; font-size: 12.500px; letter-spacing: -.27px; }
.line > div { border-right: 1px solid #dedede; border-bottom: 1px solid #dedede; display: flex; align-items: center; justify-content: center; overflow: hidden; white-space: pre; padding: 0 0 0 1px; }
.line > .digits { letter-spacing: -.55px; }
.line > .num { background: #f0f0f0; border-right-color: #a8a8a8; color: #333; font-family: "Noto Sans", sans-serif; font-size: 12px; line-height: 14px; letter-spacing: -.3px; padding-top: 1px; }
.line > .num.sel { background: #d2d2d2; color: #1e7145; border-right: 2px solid #1e7145; }
.line.heads { height: 19px; }
.line.heads > div { background: #efefef; border-right-color: #c4c4c4; border-bottom-color: #a0a0a0; font-family: "Noto Sans", sans-serif; font-size: 12px; padding-top: 1px; }
.line.heads > .sel { background: #d2d2d2; color: #1e7145; border-bottom: 2px solid #1e7145; }
.line.heads > .corner { justify-content: flex-end; align-items: flex-end; padding: 0 3px 2px 0; }
.line.titles { height: 27.700px; letter-spacing: 0; }
.line.titles > div:not(.num) { background: #ffc000; border-color: #ffc000; font-weight: 700; font-size: 13.300px; align-items: flex-end; padding: 0 0 1px; position: relative; }
.line.titles > .num { align-items: flex-end; padding-bottom: 1px; }
.line.titles > .h0 { letter-spacing: -.35px; }
.line.titles > .h2 { letter-spacing: -.3px; }
.line.titles > .h0 span { margin-left: -15px; }
.line.titles > .h1 span { margin-left: -4px; }
.line.titles > .h2 span { margin-left: -13px; }
.line.titles > .h3 span { margin-left: -2px; }
.line.titles > .h4 span { margin-left: -4px; }
.filter { position: absolute; right: 0; bottom: 1px; width: 16px; height: 16px; background: #fff; border: 1px solid #ababab; display: grid; place-items: center; }
.cursor { position: absolute; left: 294px; top: 326px; width: 534px; height: 21px; border: 2px solid #1e7145; }
.cursor i { position: absolute; right: -3px; bottom: -3px; width: 6px; height: 6px; background: #1e7145; border: solid #fff; border-width: 1px 0 0 1px; }
.vscroll { width: 19px; display: flex; flex-direction: column; align-items: center; padding: 5px 0 1px; background: #f1f1f1; }
.vthumb { width: 8px; height: 333px; border-radius: 4px; background: #6b6b6b; margin: 4px 0 auto; }

/* Sheet tabs */
.sheetbar { height: 26px; flex: none; display: flex; align-items: center; border-bottom: 1px solid #d0d0d0; }
.sheetbar > svg, .hthumb { margin-bottom: 2px; }
.sheettabs { margin-left: 15px; width: 216px; height: 25px; background: #e6e6e6; display: flex; align-items: center; padding-bottom: 2px; }
.nav1 { margin-left: 10px; }
.nav2 { margin-left: 22px; }
.tab { margin: -4px 0 0 36px; width: 85px; height: 25px; background: #fff; border: 1px solid #b5b5b5; border-top: 0; border-bottom: 2px solid #1e7145; color: #1e7145; font-weight: 700; font-size: 11.500px; text-align: center; line-height: 27px; letter-spacing: .2px; }
.plus { margin-left: 30px; }
.sheetbar > .hdots { margin: 0 16px 2px 536px; }
.sheetbar > .hthumb { margin: 0 33px 2px 4px; width: 420px; height: 8px; border-radius: 4px; background: #6b6b6b; }

/* Status bar */
.status { height: 22px; flex: none; background: #f3f3f3; display: flex; align-items: center; font-size: 11px; letter-spacing: -.12px; }
.ready { margin-left: 6px; width: 43px; }
.acctext { margin-left: 2px; width: 907px; padding-bottom: 1px; }
.view { width: 39px; height: 22px; display: grid; place-items: center; }
.view.sel { background: #dedede; }
.zoom { margin-left: 6px; }
.pc { margin-left: 11px; letter-spacing: -.4px; padding-bottom: 1px; }

/* Taskbar */
.taskbar { height: 45px; flex: none; background: #202020; display: flex; align-items: center; color: #fff; font-size: 11px; }
.weather { margin-left: 17px; }
.wtext { margin-left: 6px; width: 234px; display: flex; flex-direction: column; line-height: 15px; color: #ccc; letter-spacing: -.15px; margin-top: -2px; }
.wtext b { font-weight: 500; color: #fff; }
.pill { margin-left: 13px; width: 114px; height: 30px; border-radius: 15px; background: #2d2d2d; display: flex; align-items: center; gap: 4px; padding-left: 20px; font-size: 12px; font-weight: 500; letter-spacing: -.1px; }
.apps { margin-left: 4px; width: 576px; height: 45px; display: grid; grid-template-columns: repeat(14, 1fr); }
.apps > div { position: relative; display: grid; place-items: center; }
.apps em { position: absolute; left: 18px; bottom: 5px; width: 6px; height: 3px; border-radius: 2px; background: #8f8f8f; }
.apps .active { background: #2d2d2d; border-radius: 4px; margin: 4px 2px; }
.apps .active em { left: 11px; bottom: 1px; width: 15px; background: #3fd32f; }
.apps strong { position: absolute; left: 22px; top: 7px; width: 15px; height: 15px; border-radius: 8px; background: #3edc3a; color: #123; font-weight: 400; text-align: center; line-height: 15px; }
.apps .tiny { position: absolute; left: 22px; top: 6px; }
.tray { margin-left: 48px; width: 108px; display: flex; align-items: center; justify-content: space-between; }
.clock { width: 74px; display: flex; flex-direction: column; align-items: flex-end; line-height: 15px; margin-top: -2px; }
.badge { margin-left: 6px; width: 16px; height: 16px; border-radius: 8px; background: #3edc3a; color: #123; font-size: 9.500px; line-height: 16px; text-align: center; }
```

FILE: sheet.js
```js
const titles = ['ECONOMI', 'AREA', 'FECHA DE REVISI', 'REPORTE DE ANOMALIAS', 'TALLER', '', '', '', '', ''];
const rows = [
  ['74426', 'NORTE', '09/03/2023', 'RELLENAR ESPONJA DE ASIENTO', 'AKUMAS'],
  ['98666', 'NORTE', '09/03/2023', 'SUSPENSION, ALINEACION, ARREGLAR ASIENTO , VELOCIMETRO', 'AKUMAS'],
  ['92737', 'PONIENTE', '09/03/2023', 'LLANTA,TABLERO, LUCES ALTAS, PIERDE POTENSIA,CHECAR CLUTCHE', 'AKUMAS'],
  ['75459', 'PONIENTE', '09/03/2023', 'TAPICERIA, SELLAR PUERTAS, PARABRISAS', 'AKUMAS '],
  ['92104', 'NORTE', '09/03/2023', 'FRENSO, REVISION DE SUSPENSON, LUCES ,REVISION  CLTCH', 'AKUMAS']
];
const filter = '<span class="filter"><svg width="8" height="5" viewBox="0 0 8 5"><path d="M0 0h8L4 5z" fill="#666"/></svg></span>';
const corner = '<svg width="12" height="12" viewBox="0 0 12 12"><path d="M12 0v12H0z" fill="#b5b5b5"/></svg>';

let html = '<div class="line heads"><div class="corner">' + corner + '</div>';
for (const c of 'ABCDEFGHIJ') html += `<div class="${c === 'D' ? 'sel' : ''}">${c}</div>`;
html += '</div><div class="line titles"><div class="num">1</div>';
titles.forEach((t, i) => { html += `<div class="h${i}"><span>${t}</span>${i < 8 ? filter : ''}</div>`; });
html += '</div>';
for (let n = 2; n <= 19; n++) {
  html += `<div class="line"><div class="num${n === 17 ? ' sel' : ''}">${n}</div>`;
  for (let i = 0; i < 10; i++) html += `<div class="${i === 0 || i === 2 ? 'digits' : ''}">${(rows[n - 2] || [])[i] || ''}</div>`;
  html += '</div>';
}
document.getElementById('sheet').innerHTML = html + '<div class="cursor"><i></i></div>';
```
